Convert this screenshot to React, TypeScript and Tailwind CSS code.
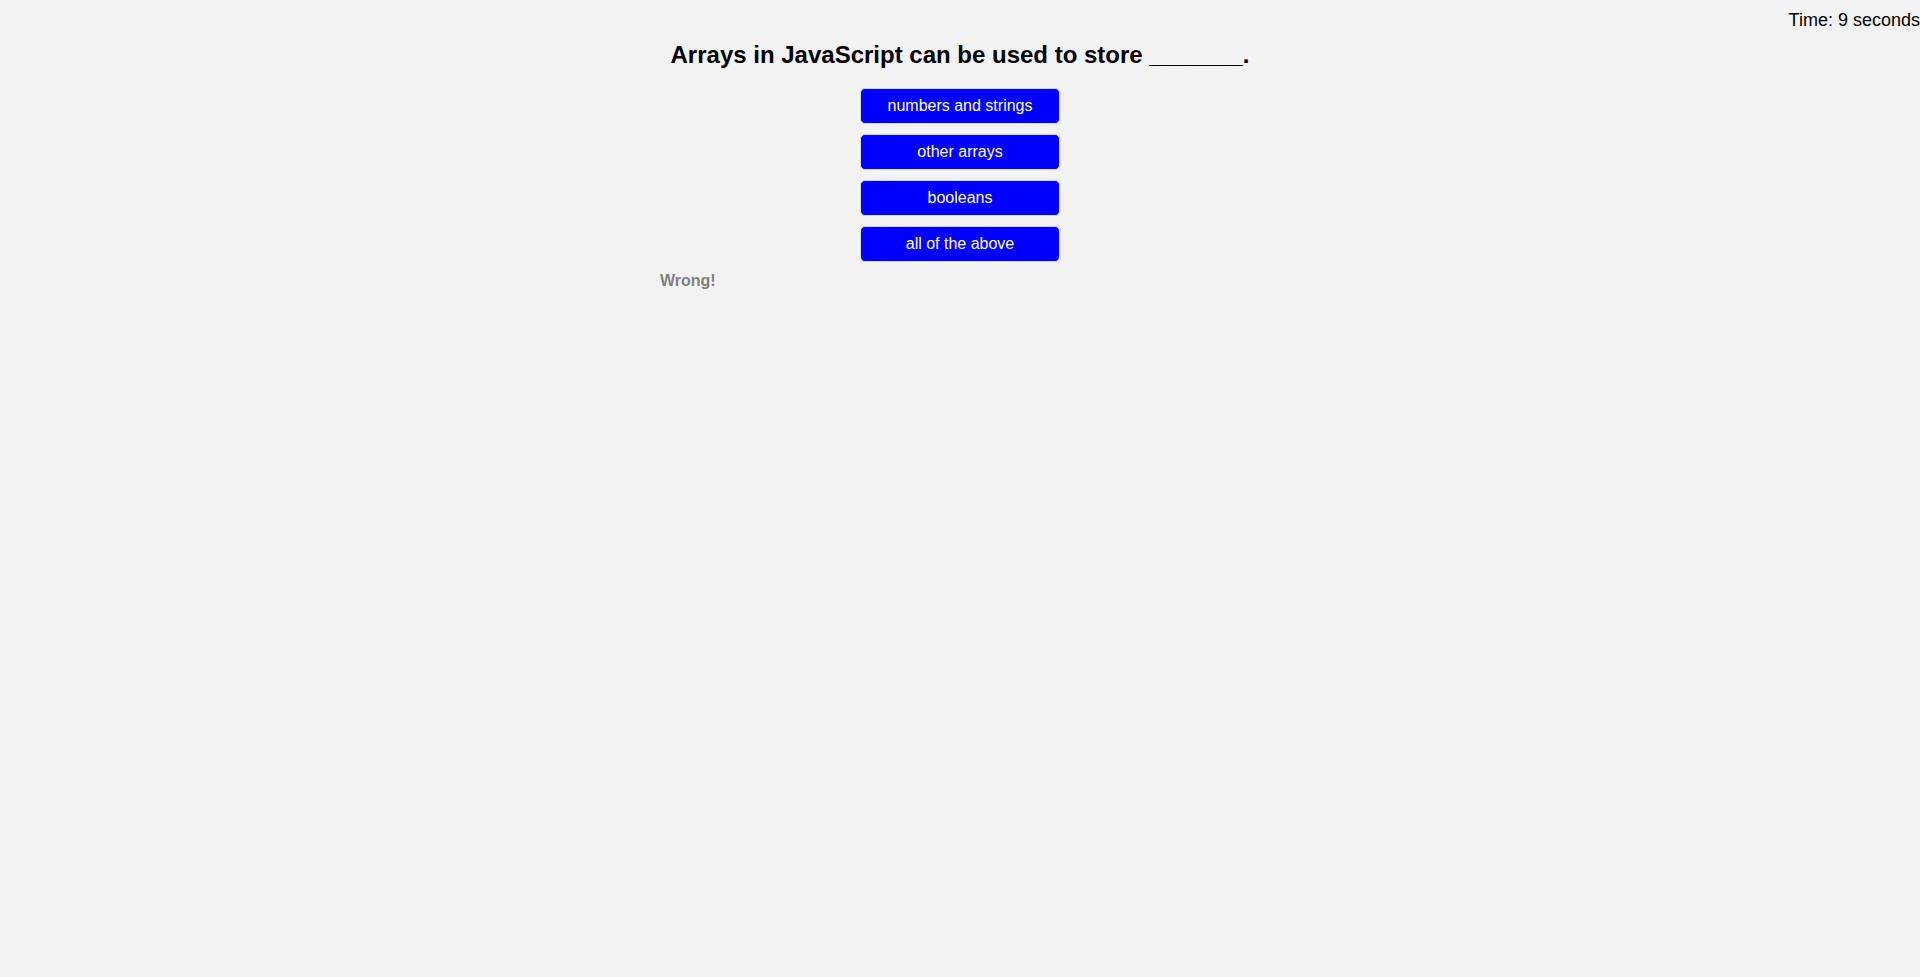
const choices = ['numbers and strings', 'other arrays', 'booleans', 'all of the above'];

export default function App() {
  return (
    <div className="min-h-screen bg-[#f2f2f2] text-black font-['Liberation_Sans',Arial,sans-serif]">
      {/* Timer */}
      <div className="flex justify-end pt-[10px] text-[18px] leading-[21px]">
        <span>Time: 9 seconds</span>
      </div>

      {/* Quiz */}
      <main className="w-[600px] mx-auto">
        <h2 className="mt-[10px] text-center text-[24px] font-bold leading-[28px]">
          Arrays in JavaScript can be used to store _______.
        </h2>

        <div className="mt-[19px] flex flex-col items-center gap-[10px]">
          {choices.map((choice) => (
            <button
              key={choice}
              className="w-[200px] h-[36px] bg-[#0000ff] text-white text-[16px] leading-[18px] rounded-[5px] border border-[#d6d6d6]"
            >
              {choice}
            </button>
          ))}
        </div>

        <p className="mt-[10px] text-[16px] leading-[18px] font-bold text-[#808080]">Wrong!</p>
      </main>
    </div>
  );
}
